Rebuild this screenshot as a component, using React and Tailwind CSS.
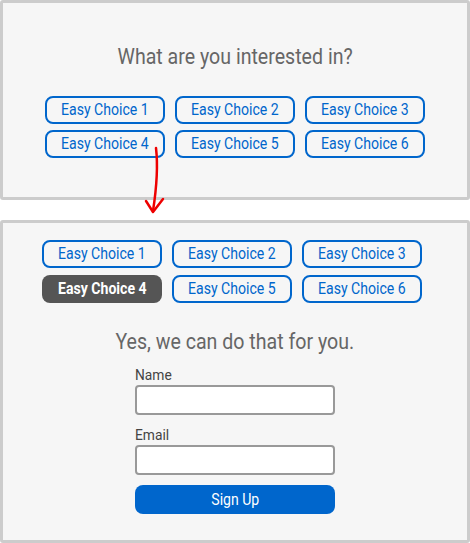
import React from "react";

const choices = [1, 2, 3, 4, 5, 6];

function Choice({ n, selected }) {
  return (
    <div
      className={
        selected
          ? "w-[120px] h-[28px] rounded-[8px] bg-[#555555] text-white font-bold flex items-center justify-center text-[16px] leading-none"
          : "w-[120px] h-[28px] rounded-[8px] border-2 border-[#0066cc] text-[#0066cc] flex items-center justify-center text-[16px] leading-none"
      }
    >
      <span className="inline-block whitespace-nowrap scale-x-[0.88]">Easy Choice {n}</span>
    </div>
  );
}

export default function App() {
  return (
    <div
      className="relative w-[470px] h-[543px] bg-white"
      style={{ fontFamily: "Roboto, 'Liberation Sans', sans-serif" }}
    >
      <div className="h-[200px] border-[3px] border-[#cccccc] rounded-[3px] bg-[#f6f6f6] flex flex-col items-center">
        <div className="mt-[40px] text-[22px] leading-[28px] text-[#666666] whitespace-nowrap scale-x-[0.89]">
          What are you interested in?
        </div>
        <div className="mt-[25px] grid grid-cols-3 gap-x-[10px] gap-y-[6px]">
          {choices.map((n) => (
            <Choice key={n} n={n} />
          ))}
        </div>
      </div>
      <div className="mt-[20px] h-[323px] border-[3px] border-[#cccccc] rounded-[3px] bg-[#f6f6f6] flex flex-col items-center pr-[6px]">
        <div className="mt-[17px] grid grid-cols-3 gap-x-[10px] gap-y-[7px]">
          {choices.map((n) => (
            <Choice key={n} n={n} selected={n === 4} />
          ))}
        </div>
        <div className="mt-[25px] text-[22px] leading-[28px] text-[#666666] pl-[6px] whitespace-nowrap scale-x-[0.89]">
          Yes, we can do that for you.
        </div>
        <div className="mt-[10px] w-[200px] flex flex-col ml-[6px]">
          <label className="text-[15px] leading-[18px] text-[#444444] origin-left scale-x-[0.92]">Name</label>
          <div className="mt-[1px] h-[30px] bg-white border-2 border-[#999999] rounded-[4px]" />
          <label className="mt-[11px] text-[15px] leading-[18px] text-[#444444] origin-left scale-x-[0.92]">Email</label>
          <div className="mt-[1px] h-[30px] bg-white border-2 border-[#999999] rounded-[4px]" />
          <div className="mt-[10px] h-[29px] bg-[#0066cc] rounded-[8px] text-white text-[16px] flex items-center justify-center">
            <span className="inline-block scale-x-[0.88]">Sign Up</span>
          </div>
        </div>
      </div>
      <svg
        className="absolute left-0 top-0 pointer-events-none"
        width="470"
        height="543"
        viewBox="0 0 470 543"
      >
        <path
          d="M156 148 C158 165 157 185 153 211"
          fill="none"
          stroke="#ee0000"
          strokeWidth="2.5"
          strokeLinecap="round"
        />
        <path
          d="M146 201 L153 212 L163 199"
          fill="none"
          stroke="#ee0000"
          strokeWidth="2.5"
          strokeLinecap="round"
          strokeLinejoin="round"
        />
      </svg>
    </div>
  );
}
